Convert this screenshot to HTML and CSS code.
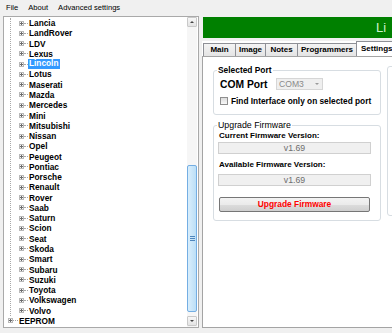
FILE: index.html
```html
<!DOCTYPE html>
<html>

<head>
  <title>Programmer</title>
  <link rel="stylesheet" href="styles.css">
</head>

<body>
  <div class="menubar">
    <span>File</span>
    <span>About</span>
    <span>Advanced settings</span>
  </div>

  <div class="main">
    <div class="tree">
      <div class="tree-list">
        <div class="children">
          <div class="row"><i class="exp"></i><i class="dash"></i><span>Lancia</span></div>
          <div class="row"><i class="exp"></i><i class="dash"></i><span>LandRover</span></div>
          <div class="row"><i class="exp"></i><i class="dash"></i><span>LDV</span></div>
          <div class="row"><i class="exp"></i><i class="dash"></i><span>Lexus</span></div>
          <div class="row"><i class="exp"></i><i class="dash"></i><span class="sel">Lincoln</span></div>
          <div class="row"><i class="exp"></i><i class="dash"></i><span>Lotus</span></div>
          <div class="row"><i class="exp"></i><i class="dash"></i><span>Maserati</span></div>
          <div class="row"><i class="exp"></i><i class="dash"></i><span>Mazda</span></div>
          <div class="row"><i class="exp"></i><i class="dash"></i><span>Mercedes</span></div>
          <div class="row"><i class="exp"></i><i class="dash"></i><span>Mini</span></div>
          <div class="row"><i class="exp"></i><i class="dash"></i><span>Mitsubishi</span></div>
          <div class="row"><i class="exp"></i><i class="dash"></i><span>Nissan</span></div>
          <div class="row"><i class="exp"></i><i class="dash"></i><span>Opel</span></div>
          <div class="row"><i class="exp"></i><i class="dash"></i><span>Peugeot</span></div>
          <div class="row"><i class="exp"></i><i class="dash"></i><span>Pontiac</span></div>
          <div class="row"><i class="exp"></i><i class="dash"></i><span>Porsche</span></div>
          <div class="row"><i class="exp"></i><i class="dash"></i><span>Renault</span></div>
          <div class="row"><i class="exp"></i><i class="dash"></i><span>Rover</span></div>
          <div class="row"><i class="exp"></i><i class="dash"></i><span>Saab</span></div>
          <div class="row"><i class="exp"></i><i class="dash"></i><span>Saturn</span></div>
          <div class="row"><i class="exp"></i><i class="dash"></i><span>Scion</span></div>
          <div class="row"><i class="exp"></i><i class="dash"></i><span>Seat</span></div>
          <div class="row"><i class="exp"></i><i class="dash"></i><span>Skoda</span></div>
          <div class="row"><i class="exp"></i><i class="dash"></i><span>Smart</span></div>
          <div class="row"><i class="exp"></i><i class="dash"></i><span>Subaru</span></div>
          <div class="row"><i class="exp"></i><i class="dash"></i><span>Suzuki</span></div>
          <div class="row"><i class="exp"></i><i class="dash"></i><span>Toyota</span></div>
          <div class="row"><i class="exp"></i><i class="dash"></i><span>Volkswagen</span></div>
          <div class="row"><i class="exp"></i><i class="dash"></i><span>Volvo</span></div>
        </div>
        <div class="row top-row"><i class="exp"></i><i class="dash"></i><span>EEPROM</span></div>
      </div>
      <div class="sb">
        <div class="sb-btn">
          <svg width="8" height="8" viewBox="0 0 8 8"><polygon points="2,5 6,5 4,3" fill="#444"/></svg>
        </div>
        <div class="sb-track">
          <div class="sb-thumb"><span class="grip"></span></div>
        </div>
        <div class="sb-btn">
          <svg width="8" height="8" viewBox="0 0 8 8"><polygon points="2,3 6,3 4,5" fill="#444"/></svg>
        </div>
      </div>
    </div>

    <div class="right">
      <div class="banner">Li</div>
      <div class="tabs">
        <div class="tab t-main">Main</div>
        <div class="tab t-image">Image</div>
        <div class="tab t-notes">Notes</div>
        <div class="tab t-prog">Programmers</div>
        <div class="tab active">Settings</div>
      </div>
      <div class="tabpage">
        <div class="col">
          <fieldset class="group">
            <legend>Selected Port</legend>
            <div class="com-row">
              <span class="com-label">COM Port</span>
              <div class="combo"><span>COM3</span><i class="caret"></i></div>
            </div>
            <div class="check-row">
              <span class="check"></span>
              <span>Find Interface only on selected port</span>
            </div>
          </fieldset>

          <fieldset class="group fw">
            <legend>Upgrade Firmware</legend>
            <div class="lbl">Current Firmware Version:</div>
            <div class="ver">v1.69</div>
            <div class="lbl lbl2">Available Firmware Version:</div>
            <div class="ver ver2">v1.69</div>
            <div class="upgrade-btn">Upgrade Firmware</div>
          </fieldset>
        </div>
        <div class="group side"></div>
      </div>
    </div>
  </div>
</body>

</html>
```

FILE: styles.css
```css
body {
  margin: 0;
  width: 392px;
  height: 333px;
  overflow: hidden;
  background: #f0f0f0;
  font-family: "Liberation Sans", Arial, sans-serif;
  color: #000;
}

.menubar {
  height: 15px;
  display: flex;
  align-items: center;
  padding-left: 6px;
  font-size: 7.6px;
}

.menubar span {
  margin-right: 10px;
}

.main {
  display: flex;
  height: 312px;
  margin-top: 1px;
}

/* tree */
.tree {
  width: 196px;
  flex-shrink: 0;
  box-sizing: border-box;
  margin-left: 3px;
  border: 1px solid #a9a9a9;
  background: #fff;
  display: flex;
}

.tree-list {
  flex: 1;
  padding-top: 1px;
  font-size: 8.3px;
  font-weight: bold;
}

.children {
  margin-left: 6px;
  border-left: 1px dotted #a8a8a8;
}

.row {
  height: 10.28px;
  display: flex;
  align-items: center;
  padding-left: 8px;
  white-space: nowrap;
}

.top-row {
  padding-left: 4px;
}

.exp {
  width: 5px;
  height: 5px;
  box-sizing: border-box;
  border: 1px solid #b9b9b9;
  background:
    linear-gradient(#6a6a6a, #6a6a6a) center / 3px 1px no-repeat,
    linear-gradient(#6a6a6a, #6a6a6a) center / 1px 3px no-repeat,
    #fafafa;
}

.dash {
  width: 4px;
  border-top: 1px dotted #a8a8a8;
  margin-right: 1px;
}

.top-row .dash {
  width: 5px;
}

.sel {
  background: #3399ff;
  color: #fff;
  padding: 0 1px;
  margin-left: -1px;
  line-height: 9.5px;
}

/* scrollbar */
.sb {
  width: 10px;
  margin-right: 1px;
  display: flex;
  flex-direction: column;
  background: #f6f6f6;
}

.sb-btn {
  height: 10px;
  box-sizing: border-box;
  border: 1px solid #c9c9c9;
  border-radius: 1px;
  background: linear-gradient(#f7f7f7, #e3e3e3);
  display: flex;
  align-items: center;
  justify-content: center;
}

.sb-btn:last-child {
  margin-bottom: 1px;
}

.sb-track {
  flex: 1;
  display: flex;
  flex-direction: column;
  padding: 138px 0 4px;
}

.sb-thumb {
  flex: 1;
  border: 1px solid #74aee3;
  border-radius: 2px;
  background: linear-gradient(90deg, #d9eefc, #bcdff7);
  display: flex;
  align-items: center;
  justify-content: center;
}

.grip {
  width: 5px;
  height: 5px;
  background: repeating-linear-gradient(#4f86bd 0 1px, transparent 1px 2px);
}

/* right side */
.right {
  flex: 1;
  display: flex;
  flex-direction: column;
  padding-left: 3px;
  min-width: 0;
}

.banner {
  margin: 1px 0 0 1px;
  height: 21px;
  background: #008000;
  color: #ccf2cc;
  font-size: 13px;
  line-height: 21px;
  padding-left: 173px;
  white-space: nowrap;
}

.tabs {
  margin-top: 3px;
  height: 15px;
  display: flex;
  align-items: flex-end;
  padding-left: 1px;
  font-size: 8px;
  font-weight: bold;
  background: #fff;
  overflow: hidden;
}

.tab {
  flex-shrink: 0;
  height: 13px;
  box-sizing: border-box;
  border: 1px solid #8e9096;
  border-bottom: none;
  background: linear-gradient(#f4f4f4, #e4e4e4);
  text-align: center;
  line-height: 12px;
  white-space: nowrap;
}

.t-main { width: 33px; }
.t-image { width: 31px; margin-left: -1px; }
.t-notes { width: 33px; margin-left: -1px; }
.t-prog { width: 60px; margin-left: -1px; }

.tab.active {
  height: 15px;
  width: 50px;
  margin-left: -1px;
  background: #fff;
  line-height: 14px;
  text-align: left;
  padding-left: 4px;
}

.tabpage {
  flex: 1;
  border: 1px solid #a4a4a4;
  border-right: none;
  background: #fff;
  display: flex;
  overflow: hidden;
}

.col {
  width: 168px;
  margin-left: 10px;
  flex-shrink: 0;
}

.group {
  margin: 8px 0 0;
  padding: 0 5px 8px;
  border: 1px solid #d7dde2;
  border-radius: 3px;
  min-width: 0;
}

.group legend {
  padding: 0 1px;
  margin-left: -2px;
  font-size: 8.4px;
  font-weight: bold;
  line-height: 10px;
}

.com-row {
  display: flex;
  align-items: center;
  height: 12px;
  margin-top: 3px;
  padding-left: 1px;
}

.com-label {
  width: 56px;
  font-size: 10.3px;
  font-weight: bold;
}

.combo {
  width: 47px;
  height: 12px;
  box-sizing: border-box;
  border: 1px solid #d6d6d6;
  background: #efefef;
  color: #8a8a8a;
  font-size: 8.6px;
  line-height: 10px;
  padding-left: 2px;
  display: flex;
  align-items: center;
  justify-content: space-between;
}

.caret {
  width: 0;
  height: 0;
  border-left: 2px solid transparent;
  border-right: 2px solid transparent;
  border-top: 2px solid #9a9a9a;
  margin-right: 3px;
}

.check-row {
  display: flex;
  align-items: center;
  height: 10px;
  margin-top: 6px;
  padding-left: 1px;
  font-size: 8.3px;
  font-weight: bold;
  white-space: nowrap;
}

.check {
  width: 8px;
  height: 8px;
  box-sizing: border-box;
  border: 1px solid #8f8f8f;
  background: linear-gradient(#dcdcdc, #f8f8f8);
  margin-right: 3px;
}

.fw {
  margin-top: 5px;
}

.fw legend {
  font-weight: normal;
  font-size: 8.8px;
}

.lbl {
  margin-top: 1px;
  font-size: 8px;
  font-weight: bold;
  line-height: 10px;
  white-space: nowrap;
}

.lbl2 {
  margin-top: 6px;
}

.ver {
  margin: 1px 0 0 -1px;
  width: 153px;
  height: 12px;
  box-sizing: border-box;
  border: 1px solid #d0d0d0;
  background: #f0f0f0;
  color: #6d6d6d;
  font-size: 8.7px;
  line-height: 10px;
  text-align: center;
}

.ver2 {
  margin-top: 4px;
}

.upgrade-btn {
  margin-top: 11px;
  width: 151px;
  height: 15px;
  box-sizing: border-box;
  border: 1px solid #767676;
  border-radius: 2px;
  background: linear-gradient(#f3f3f3 0%, #ebebeb 50%, #dddddd 50%, #cfcfcf 100%);
  color: #f00;
  font-size: 8.4px;
  font-weight: bold;
  line-height: 13px;
  text-align: center;
}

.side {
  margin: 9px 0 0 6px;
  width: 60px;
  height: 150px;
  flex-shrink: 0;
  padding: 0;
  box-sizing: border-box;
}
```
